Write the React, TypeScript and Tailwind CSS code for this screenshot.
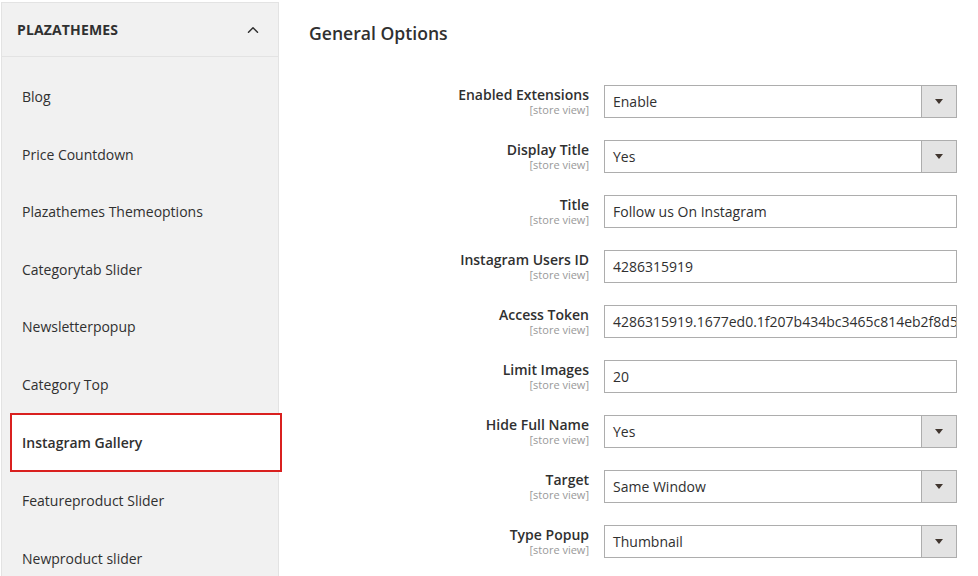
import { ChevronUp } from "lucide-react";

const navItems = [
  "Blog",
  "Price Countdown",
  "Plazathemes Themeoptions",
  "Categorytab Slider",
  "Newsletterpopup",
  "Category Top",
  "Instagram Gallery",
  "Featureproduct Slider",
  "Newproduct slider",
];

type Field = { label: string; type: "select" | "text"; value: string };

const fields: Field[] = [
  { label: "Enabled Extensions", type: "select", value: "Enable" },
  { label: "Display Title", type: "select", value: "Yes" },
  { label: "Title", type: "text", value: "Follow us On Instagram" },
  { label: "Instagram Users ID", type: "text", value: "4286315919" },
  { label: "Access Token", type: "text", value: "4286315919.1677ed0.1f207b434bc3465c814eb2f8d5" },
  { label: "Limit Images", type: "text", value: "20" },
  { label: "Hide Full Name", type: "select", value: "Yes" },
  { label: "Target", type: "select", value: "Same Window" },
  { label: "Type Popup", type: "select", value: "Thumbnail" },
];

function Control({ field }: { field: Field }) {
  return (
    <div className="ml-[15px] flex h-[33px] w-[353px] overflow-hidden border border-[#adadad] bg-white">
      <div className="flex-1 overflow-hidden whitespace-nowrap pl-[8px] text-[14px] leading-[31px] text-[#303030]">
        {field.value}
      </div>
      {field.type === "select" && (
        <div className="flex w-[35px] items-center justify-center border-l border-[#adadad] bg-[#e3e3e3]">
          <svg width="8" height="5" viewBox="0 0 8 5">
            <path d="M0 0h8L4 5z" fill="#41362f" />
          </svg>
        </div>
      )}
    </div>
  );
}

export default function App() {
  return (
    <div
      className="flex h-[576px] w-[978px] overflow-hidden bg-white"
      style={{ fontFamily: '"Open Sans", "Liberation Sans", sans-serif' }}
    >
      {/* Sidebar */}
      <aside className="ml-px mt-[2px] h-[600px] w-[278px] shrink-0 border border-[#e3e3e3] bg-[#f1f1f1]">
        <div className="flex h-[54px] items-center justify-between border-b border-[#e3e3e3] pl-[15px] pr-[16px]">
          <span className="text-[14px] font-bold tracking-[0.01em] text-[#303030]">PLAZATHEMES</span>
          <ChevronUp size={18} strokeWidth={2} className="text-[#303030]" />
        </div>
        <ul className="pt-[11px]">
          {navItems.map((item) => {
            const active = item === "Instagram Gallery";
            return (
              <li
                key={item}
                className={
                  active
                    ? "relative z-10 ml-[8px] flex h-[59px] w-[272px] items-center border-2 border-[#d9201f] bg-white pl-[10px] text-[14px] font-semibold text-[#303030]"
                    : "ml-[8px] flex h-[57.5px] items-center pl-[12px] text-[14px] text-[#303030]"
                }
              >
                {item}
              </li>
            );
          })}
        </ul>
      </aside>

      {/* Main */}
      <main className="flex-1 pl-[30px] pt-[21px]">
        <h2 className="text-[17.6px] font-semibold leading-[24px] text-[#303030]">General Options</h2>
        <div className="mt-[40px] flex flex-col gap-[22px]">
          {fields.map((f) => (
            <div key={f.label} className="flex">
              <div className="w-[280px] pt-[2px] text-right">
                <div className="text-[14px] font-semibold leading-[16px] text-[#303030]">{f.label}</div>
                <div className="mt-[1px] text-[11px] leading-[12px] text-[#999999]">[store view]</div>
              </div>
              <Control field={f} />
            </div>
          ))}
        </div>
      </main>
    </div>
  );
}
